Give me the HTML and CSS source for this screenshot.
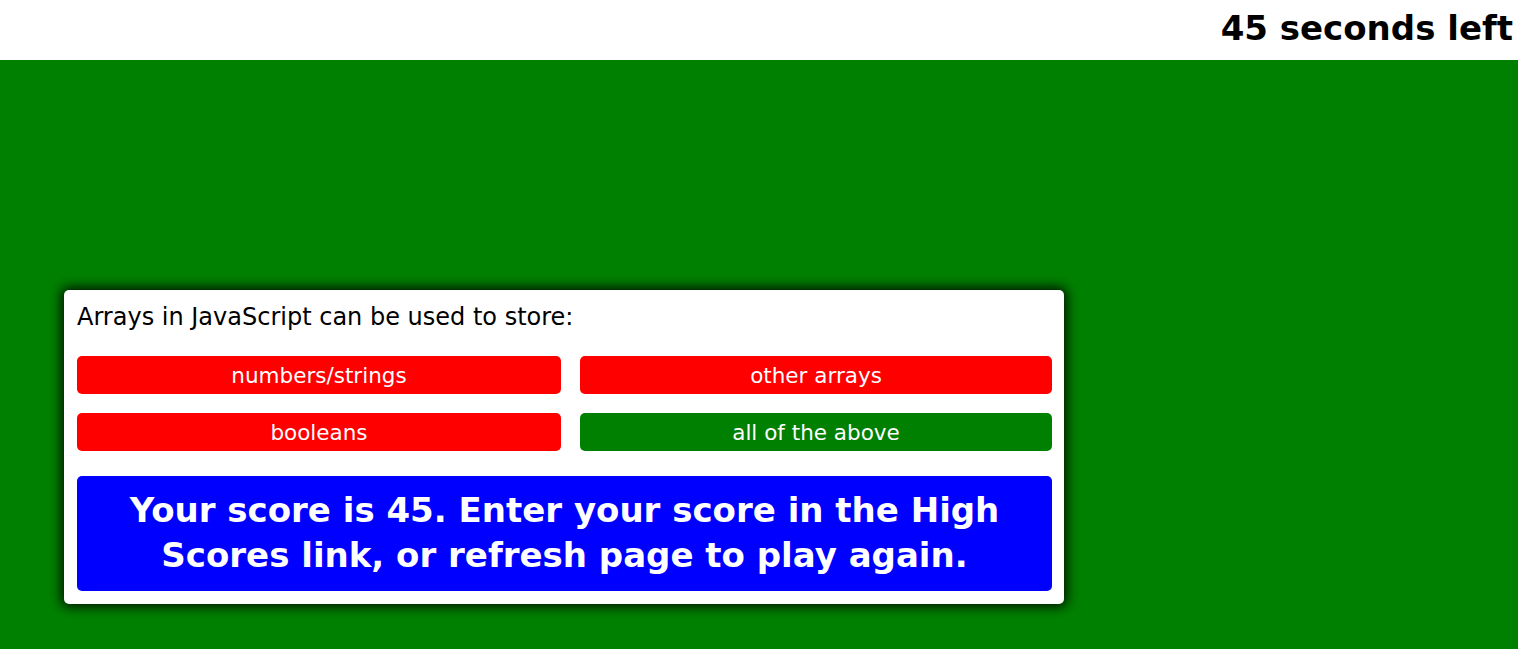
FILE: index.html
```html
<!DOCTYPE html>
<html>
<head>
<meta charset="utf-8">
<link rel="stylesheet" href="styles.css">
</head>
<body>
<header class="topbar">
  <div class="timer">45 seconds left</div>
</header>
<main class="stage">
  <section class="card">
    <p class="question">Arrays in JavaScript can be used to store:</p>
    <div class="answers">
      <button class="answer wrong">numbers/strings</button>
      <button class="answer wrong">other arrays</button>
      <button class="answer wrong">booleans</button>
      <button class="answer right">all of the above</button>
    </div>
    <div class="result">Your score is 45. Enter your score in the High Scores link, or refresh page to play again.</div>
  </section>
</main>
</body>
</html>
```

FILE: styles.css
```css
html, body {
  margin: 0;
  padding: 0;
  height: 100%;
}
body {
  font-family: "DejaVu Sans", sans-serif;
  display: flex;
  flex-direction: column;
  background: #008000;
}
.topbar {
  background: #fff;
  height: 60px;
  display: flex;
  justify-content: flex-end;
  align-items: flex-start;
  padding-right: 5px;
}
.timer {
  font-size: 34px;
  line-height: 56px;
  font-weight: bold;
  color: #000;
}
.stage {
  flex: 1;
  padding: 230px 0 0 64px;
}
.card {
  width: 1000px;
  box-sizing: border-box;
  background: #fff;
  border-radius: 5px;
  box-shadow: 0 0 12px 3px rgba(0,0,0,0.85);
  padding: 12px 12px 13px 13px;
}
.question {
  margin: 0 0 24px 0;
  font-size: 24px;
  line-height: 30px;
  color: #000;
}
.answers {
  display: grid;
  grid-template-columns: 484px 1fr;
  column-gap: 19px;
  row-gap: 19px;
}
.answer {
  height: 38px;
  border: none;
  border-radius: 5px;
  color: #fff;
  font-family: inherit;
  font-size: 21.5px;
  padding: 0;
}
.wrong { background: #ff0000; }
.right { background: #008000; }
.result {
  margin-top: 25px;
  background: #0000ff;
  color: #fff;
  border-radius: 5px;
  font-weight: bold;
  font-size: 34px;
  line-height: 45px;
  text-align: center;
  padding: 12px 20px 13px;
}
```
